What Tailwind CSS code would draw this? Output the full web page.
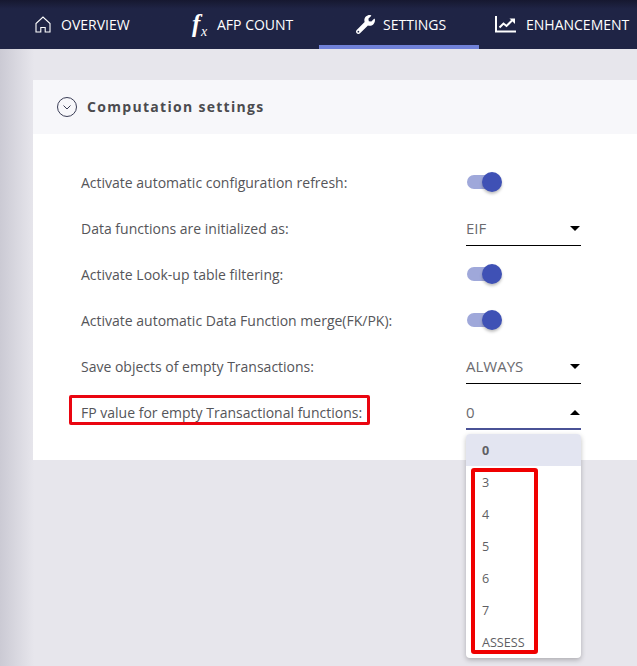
<!DOCTYPE html>
<html lang="en">
<head>
    <meta charset="UTF-8">
    <title>Settings</title>
    <script src="https://cdn.jsdelivr.net/npm/@tailwindcss/browser@4"></script>
</head>
<body class="w-[637px] h-[666px] overflow-hidden relative bg-[#e7e6ec] font-['Open_Sans',sans-serif] text-[#555559]">
    <!-- Top nav -->
    <nav class="h-[49px] flex bg-gradient-to-b from-[#161830] from-0% to-[#1f2445] to-[18%] text-white text-[14px] shrink-0">
        <a class="w-[159px] shrink-0 h-full flex items-center pl-[35px] gap-[10px]">
            <svg width="16" height="17" viewBox="0 0 16 17" fill="none" stroke="#fff" stroke-width="1.1"><path d="M1 16V7.500L8 1l7 6.500V16H10.200V11.500H5.800V16Z"/></svg>
            <span>OVERVIEW</span>
        </a>
        <a class="w-[160px] shrink-0 h-full flex items-center pl-[33px] gap-[11px]">
            <span class="w-[14px] h-[24px] font-['Liberation_Serif',serif] italic font-bold text-[25px] leading-[22px] relative">f<sub class="text-[14px] font-normal absolute top-[12px] left-[9px] leading-none">x</sub></span>
            <span>AFP COUNT</span>
        </a>
        <a class="w-[160px] shrink-0 h-full flex items-center pl-[37px] pt-[3px] gap-[8px] border-b-4 border-[#7081d8]">
            <svg width="19" height="19" viewBox="0 0 512 512" fill="#fff"><path d="M507.700 109.100c-2.200-9-13.500-12.100-20.100-5.500l-74.400 74.400-67.900-11.300-11.300-67.900 74.400-74.400c6.600-6.600 3.400-17.900-5.700-20.200-47.400-11.700-99.600.900-136.600 37.900-39.600 39.600-50.600 97.100-34 147.200L18.700 402.800c-25 25-25 65.500 0 90.500 25 25 65.500 25 90.500 0l213.200-213.200c50.100 16.700 107.500 5.700 147.400-34.200 37.100-37.100 49.700-89.300 37.900-136.800zM64 472c-13.200 0-24-10.700-24-24 0-13.300 10.700-24 24-24s24 10.700 24 24c0 13.300-10.700 24-24 24z"/></svg>
            <span>SETTINGS</span>
        </a>
        <a class="w-[160px] shrink-0 h-full flex items-center pl-[16px] gap-[10px]">
            <svg width="21" height="17" viewBox="0 0 21 17" fill="none" stroke="#fff"><path d="M1 0v15.500h20" stroke-width="2"/><path d="M4.500 11.500l4-4 3 2.500 5.500-5.500" stroke-width="2"/><path d="M14.500 2.500h5.500v5.500z" fill="#fff" stroke="none"/></svg>
            <span class="whitespace-nowrap">ENHANCEMENT</span>
        </a>
    </nav>

    <!-- Left shadow -->
    <div class="absolute left-0 top-[49px] bottom-0 w-[34px] bg-gradient-to-r from-[#cbcad4] to-[#e7e6ec]"></div>

    <main class="relative pt-[31px] pl-[33px]">
        <section class="bg-white h-[380px]">
            <header class="h-[54px] bg-[#f7f7fa] flex items-center pl-[24px] gap-[10px]">
                <svg width="20" height="20" viewBox="0 0 20 20" fill="none" stroke="#3a3d55"><circle cx="10" cy="10" r="9.500"/><path d="M6.500 8.500 10 12l3.500-3.500"/></svg>
                <h2 class="text-[14px] font-bold tracking-[1.300px] text-[#4b4b4f] leading-none">Computation settings</h2>
            </header>
            <div class="pl-[48px] pt-[25px] text-[14px]">
                <div class="h-[46px] flex items-center">
                    <span class="w-[385px] shrink-0">Activate automatic configuration refresh:</span>
                    <div class="relative w-[36px] h-[20px]">
                        <div class="absolute left-[1px] top-[3px] w-[31px] h-[14px] rounded-full bg-[#9fa8da]"></div>
                        <div class="absolute left-[16px] top-0 w-[20px] h-[20px] rounded-full bg-[#3f51b5] shadow-[0_2px_3px_rgba(0,0,0,0.25)]"></div>
                    </div>
                </div>
                <div class="h-[46px] flex items-center">
                    <span class="w-[385px] shrink-0">Data functions are initialized as:</span>
                    <div class="w-[115px] h-[32px] flex items-center justify-between border-b border-black relative top-[2px] pb-[2px] pr-[1px] text-[15px] text-[#6b6b70]">
                        <span>EIF</span>
                        <span class="w-0 h-0 border-x-[5px] border-x-transparent border-t-[5px] border-t-black"></span>
                    </div>
                </div>
                <div class="h-[46px] flex items-center">
                    <span class="w-[385px] shrink-0">Activate Look-up table filtering:</span>
                    <div class="relative w-[36px] h-[20px]">
                        <div class="absolute left-[1px] top-[3px] w-[31px] h-[14px] rounded-full bg-[#9fa8da]"></div>
                        <div class="absolute left-[16px] top-0 w-[20px] h-[20px] rounded-full bg-[#3f51b5] shadow-[0_2px_3px_rgba(0,0,0,0.25)]"></div>
                    </div>
                </div>
                <div class="h-[46px] flex items-center">
                    <span class="w-[385px] shrink-0">Activate automatic Data Function merge(FK/PK):</span>
                    <div class="relative w-[36px] h-[20px]">
                        <div class="absolute left-[1px] top-[3px] w-[31px] h-[14px] rounded-full bg-[#9fa8da]"></div>
                        <div class="absolute left-[16px] top-0 w-[20px] h-[20px] rounded-full bg-[#3f51b5] shadow-[0_2px_3px_rgba(0,0,0,0.25)]"></div>
                    </div>
                </div>
                <div class="h-[46px] flex items-center">
                    <span class="w-[385px] shrink-0">Save objects of empty Transactions:</span>
                    <div class="w-[115px] h-[32px] flex items-center justify-between border-b border-black relative top-[2px] pb-[2px] pr-[1px] text-[15px] text-[#6b6b70]">
                        <span>ALWAYS</span>
                        <span class="w-0 h-0 border-x-[5px] border-x-transparent border-t-[5px] border-t-black"></span>
                    </div>
                </div>
                <div class="h-[46px] flex items-center">
                    <span class="w-[385px] shrink-0">FP value for empty Transactional functions:</span>
                    <div class="w-[115px] h-[32px] flex items-center justify-between border-b-2 border-[#4a5296] relative top-[2px] pb-[1px] pr-[1px] text-[15px] text-[#6b6b70]">
                        <span>0</span>
                        <span class="w-0 h-0 border-x-[5px] border-x-transparent border-b-[5px] border-b-black"></span>
                    </div>
                </div>
            </div>
        </section>
    </main>

    <!-- Open dropdown -->
    <ul class="absolute left-[466px] top-[434px] w-[115px] bg-white rounded-[4px] overflow-hidden shadow-[0_2px_5px_rgba(0,0,0,0.25)] text-[12.600px] text-[#5f5f64]">
        <li class="h-[32px] flex items-center pl-[16px] pt-[2px] bg-[#e3e5f1] font-bold">0</li>
        <li class="h-[32px] flex items-center pl-[16px] pt-[2px]">3</li>
        <li class="h-[32px] flex items-center pl-[16px] pt-[2px]">4</li>
        <li class="h-[32px] flex items-center pl-[16px] pt-[2px]">5</li>
        <li class="h-[32px] flex items-center pl-[16px] pt-[2px]">6</li>
        <li class="h-[32px] flex items-center pl-[16px] pt-[2px]">7</li>
        <li class="h-[32px] flex items-center pl-[16px] pt-[2px]">ASSESS</li>
    </ul>

    <!-- Red annotation boxes -->
    <div class="absolute left-[69px] top-[395px] w-[301px] h-[30px] border-[3px] border-[#ea0510] rounded-[2px]"></div>
    <div class="absolute left-[471px] top-[468px] w-[67px] h-[186px] border-[4px] border-[#f00000] rounded-[3px]"></div>
</body>
</html>
